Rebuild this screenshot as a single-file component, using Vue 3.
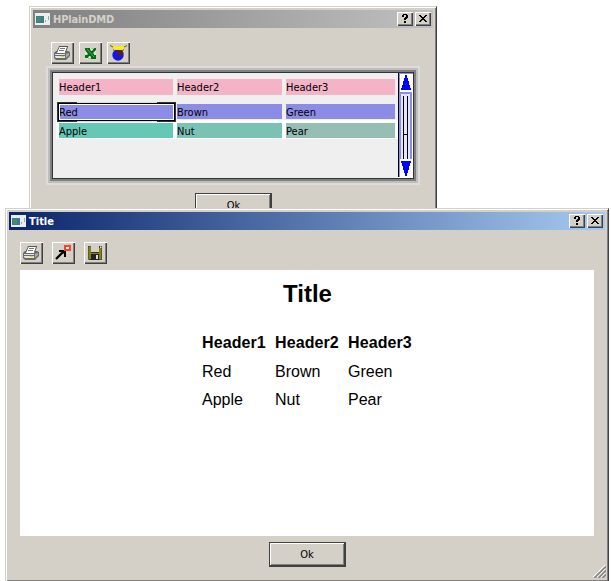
<script setup>
import { h } from 'vue'

const headers = ['Header1', 'Header2', 'Header3']
const rows = [['Red', 'Brown', 'Green'], ['Apple', 'Nut', 'Pear']]

const p = (d, fill) => h('path', { d, fill })
const line = (d, stroke, w = 1) => h('path', { d, stroke, fill: 'none', 'stroke-width': w })

const shapes = {
  printer: [
    p('M8 4H17L14 11H5Z', '#fff'),
    line('M8 4.5H17M8.5 4L5.5 11M16.5 5L14.5 10', '#555'),
    line('M9 6.5H14M8 8.5H13', '#777'),
    p('M3 11L5 9H6V11H14L15 9H17L19 10V14L15 18H5L3 16Z', '#6a6a6a'),
    p('M4 12H14V13H4ZM4 14H14V16H5L4 15Z', '#e4e4e4'),
    p('M15 12L18 11V13L15 16Z', '#aaa'),
    p('M10 14H13V15H10Z', '#e6d800'),
  ],
  excel: [
    p('M6 6H17V17H6Z', '#dde6da'),
    p('M6 6H11V7L12 9H13L15 6H17V8L14 11L15 12V13H17V17H12V15L11 14H10L9 16H6V13H8L9 12L6 8Z', '#056e10'),
    line('M8 7L15 15', '#5fb566', 0.8),
    line('M12 6.5H15M9 16.5H12', '#9bd19e'),
  ],
  globe: [
    h('circle', { cx: 11, cy: 13, r: 5.7, fill: '#1515ee' }),
    p('M11 8H15L16.5 11L16 13H14L13 12L11 13L10 10Z', '#5a1f20'),
    p('M10 14H13V17H11Z', '#32205c'),
    p('M3 3L7 4H16L20 3L15 8H8Z', '#f7ee18'),
    line('M3 3.5L6 5M20 3.5L17 5M6 7.5L8 9M17 7.5L15 9', '#625b12'),
  ],
  arrow: [
    line('M4 17L12 9', '#000', 2.2),
    p('M7 8H14V15H12V12L10 10H7Z', '#000'),
    p('M12 3H19V9H12Z', '#f94328'),
    p('M14 5H17V7H14Z', '#fff'),
  ],
  disk: [
    p('M4 4H18V18H5L4 17Z', '#333'),
    p('M4.5 4.5H7V11H15V6H17.5V17.5H15V12H7V17H4.5Z', '#85821a'),
    p('M7 4H15V10H7Z', '#d4d0c8'),
    p('M7 12H15V18H7Z', '#222'),
    p('M12 13H14V17H12Z', '#ddd'),
    p('M16 4.5H17.5V6H16Z', '#eee'),
  ],
  help: [p('M5 3H6V2H10V3H11V6H10V7H9V8H7V6H8V5H9V3H7V5H5ZM7 9H9V11H7Z', '#000')],
  close: [p('M4 3H6V4H7V5H9V4H10V3H12V4H11V5H10V6H9V7H10V8H11V9H12V10H10V9H9V8H7V9H6V10H4V9H5V8H6V7H7V6H6V5H5V4H4Z', '#000')],
}
const Shape = (props) => shapes[props.name]
Shape.props = ['name']
</script>

<template>
  <main class="desktop">
    <section class="window back">
      <header class="titlebar inactive">
        <svg class="appicon" viewBox="0 0 16 13"><path d="M0 0H15V12H0Z" fill="#eceeee" /><path d="M1 3H9V10H1Z" fill="#3d7a94" /><path d="M2 4H6V9H2Z" fill="#438e6b" /><path d="M10 7H11V9H10ZM13 3H14V7H13Z" fill="#8cabb7" /></svg>
        <span class="caption">HPlainDMD</span>
        <button v-for="n in ['help', 'close']" :key="n" class="ctl"><svg viewBox="0 0 16 14"><Shape :name="n" /></svg></button>
      </header>
      <nav class="tools">
        <button v-for="n in ['printer', 'excel', 'globe']" :key="n" class="tool"><svg viewBox="0 0 23 22"><Shape :name="n" /></svg></button>
      </nav>
      <div class="frame"><div class="frame-mid"><div class="frame-in">
        <div class="grid">
          <div class="grid-row head"><span v-for="t in headers" :key="t">{{ t }}</span></div>
          <div v-for="(r, i) in rows" :key="i" class="grid-row" :class="'r' + i">
            <span v-for="t in r" :key="t" :class="t.toLowerCase()">{{ t }}</span>
          </div>
        </div>
        <svg class="scroll" viewBox="0 0 15 105">
          <path d="M0 0H15V105H0Z" fill="#fff" /><path d="M0 0H1V104H0Z" fill="#000" />
          <path d="M1 0H15V1H2V104H1Z" fill="#8c8ce6" /><path d="M1 19H14V86H1Z" fill="#8c8ce6" />
          <path d="M3 21H12V86H3Z" fill="#e4e4fa" />
          <path d="M5 23H6V86H5ZM9 23H10V86H9ZM5 61H10V62H5Z" fill="#000" />
          <path d="M7 2H9V5H10V8H11V12H12V15H13V17H3V15H4V12H5V8H6V5H7Z" fill="#00f" />
          <path d="M3 88H13V90H12V93H11V97H10V100H9V103H7V100H6V97H5V93H4V90H3Z" fill="#00f" />
        </svg>
      </div></div></div>
      <button class="ok">Ok</button>
    </section>

    <section class="window front">
      <header class="titlebar active">
        <svg class="appicon" viewBox="0 0 16 13"><path d="M0 0H15V12H0Z" fill="#eceeee" /><path d="M1 3H9V10H1Z" fill="#3d7a94" /><path d="M2 4H6V9H2Z" fill="#438e6b" /><path d="M10 7H11V9H10ZM13 3H14V7H13Z" fill="#8cabb7" /></svg>
        <span class="caption">Title</span>
        <button v-for="n in ['help', 'close']" :key="n" class="ctl"><svg viewBox="0 0 16 14"><Shape :name="n" /></svg></button>
      </header>
      <nav class="tools">
        <button v-for="n in ['printer', 'arrow', 'disk']" :key="n" class="tool"><svg viewBox="0 0 23 22"><Shape :name="n" /></svg></button>
      </nav>
      <article class="page">
        <h2>Title</h2>
        <div class="report">
          <b v-for="t in headers" :key="t">{{ t }}</b>
          <template v-for="(r, i) in rows" :key="i"><span v-for="t in r" :key="t">{{ t }}</span></template>
        </div>
      </article>
      <button class="ok">Ok</button>
      <svg class="grip" viewBox="0 0 13 13"><path d="M0 12L12 0M4 12L12 4M8 12L12 8" stroke="#fff" /><path d="M1.5 13L13 1.5M5.5 13L13 5.5M9.5 13L13 9.5" stroke="#808080" stroke-width="1.5" /></svg>
    </section>
  </main>
</template>

<style>
body { margin: 0; background: #fff; }
</style>

<style scoped>
* { box-sizing: border-box; }
.desktop { position: relative; width: 611px; height: 581px; overflow: hidden; font: 11px/14px "DejaVu Sans Condensed", "DejaVu Sans", sans-serif; color: #000; }
svg { display: block; }
button { font: inherit; color: inherit; padding: 0; margin: 0; border-radius: 0; background: #d4d0c8; }
.window { position: absolute; display: flex; flex-direction: column; background: #d4d0c8; padding: 2px; border: 1px solid #d4d0c8; border-right-color: #404040; border-bottom-color: #404040; box-shadow: inset 1px 1px #fff, inset -1px -1px #808080; }
.back { left: 29px; top: 6px; width: 408px; height: 240px; }
.front { left: 5px; top: 208px; width: 604px; height: 374px; }
.titlebar { display: flex; align-items: center; flex: none; height: 18px; margin: 1px 1px 0; padding: 0 2px; gap: 2px; }
.inactive { background: linear-gradient(90deg, #808080, #c0c0c0); color: #d4d0c8; }
.active { background: linear-gradient(90deg, #0a246a, #a6caf0); color: #fff; }
.appicon { flex: none; align-self: flex-start; width: 16px; height: 13px; margin-top: 3px; shape-rendering: crispEdges; }
.caption { flex: 1; padding-top: 1px; font-weight: bold; letter-spacing: -0.15px; }
.active .caption { letter-spacing: 0; }
.ctl { flex: none; width: 16px; height: 14px; border: 0; box-shadow: inset 1px 1px #fff, inset -1px -1px #404040, inset -2px -2px #808080; }
.ctl svg { width: 16px; height: 14px; shape-rendering: crispEdges; }
.tools { display: flex; flex: none; }
.back .tools { margin: 14px 0 0 19px; gap: 5px; }
.front .tools { margin: 12px 0 0 12px; gap: 9px; }
.tool { width: 23px; height: 22px; border: 0; box-shadow: inset 1px 1px #fff, inset -1px -1px #404040, inset -2px -2px #808080; }
.tool svg { width: 23px; height: 22px; }
.frame { flex: none; width: 374px; height: 119px; margin: 2px 0 0 14px; border: 2px solid #dddcdb; }
.frame-mid { height: 115px; border: 2px solid #bebebe; }
.frame-in { display: flex; height: 111px; border: 2px solid #808080; outline: 1px solid #333; outline-offset: -3px; padding: 1px; }
.grid { flex: 1; background: #efefef; padding: 6px 0 0 3px; }
.grid-row { display: grid; grid-template-columns: 114px 105px 109px; column-gap: 4px; padding-left: 3px; }
.grid-row span { line-height: 17px; height: 15px; }
.grid-row.head span { height: 16px; background: #f4b3c7; }
.r0 { margin-top: 9px; }
.r0 span { background: #8c8ce6; }
.r1 { margin-top: 1px; padding-top: 3px; height: 19px; background: #fff; }
.r1 .apple { background: #65c8b5; }
.r1 .nut { background: #7ac3b4; }
.r1 .pear { background: #97beb5; }
.red { position: relative; }
.red::after { content: ""; position: absolute; inset: 0 -1px -1px 0; border: 1px solid #fff; outline: 1px solid #000; }
.red::before { content: ""; position: absolute; inset: -2px -3px -3px -2px; border: 1px solid; border-image: linear-gradient(90deg, #333 20px, #dcdcdc 20px 100px, #333 100px) 1; }
.scroll { flex: none; width: 15px; height: 105px; shape-rendering: crispEdges; }
.ok { flex: none; align-self: center; width: 77px; height: 25px; padding: 2px 0 0 1px; border: 1px solid #404040; border-width: 1px 2px 2px 1px; box-shadow: inset 1px 1px #fff, inset -1px -1px #808080; }
.back .ok { margin: 8px 0 0 1px; }
.page { flex: none; width: 574px; height: 266px; margin: 6px 0 0 12px; background: #fff; font: 16px/18px "Liberation Sans", Arial, sans-serif; }
h2 { margin: 0; padding: 10px 0 0 1px; font-size: 24px; line-height: 28px; text-align: center; }
.report { display: grid; grid-template-columns: repeat(3, 73px); grid-template-rows: 29px 28px 28px; margin: 26px 0 0 182px; }
.report b { letter-spacing: 0.1px; }
.front .ok { margin-top: 6px; }
.grip { position: absolute; right: 2px; bottom: 3px; width: 13px; height: 13px; }
</style>
